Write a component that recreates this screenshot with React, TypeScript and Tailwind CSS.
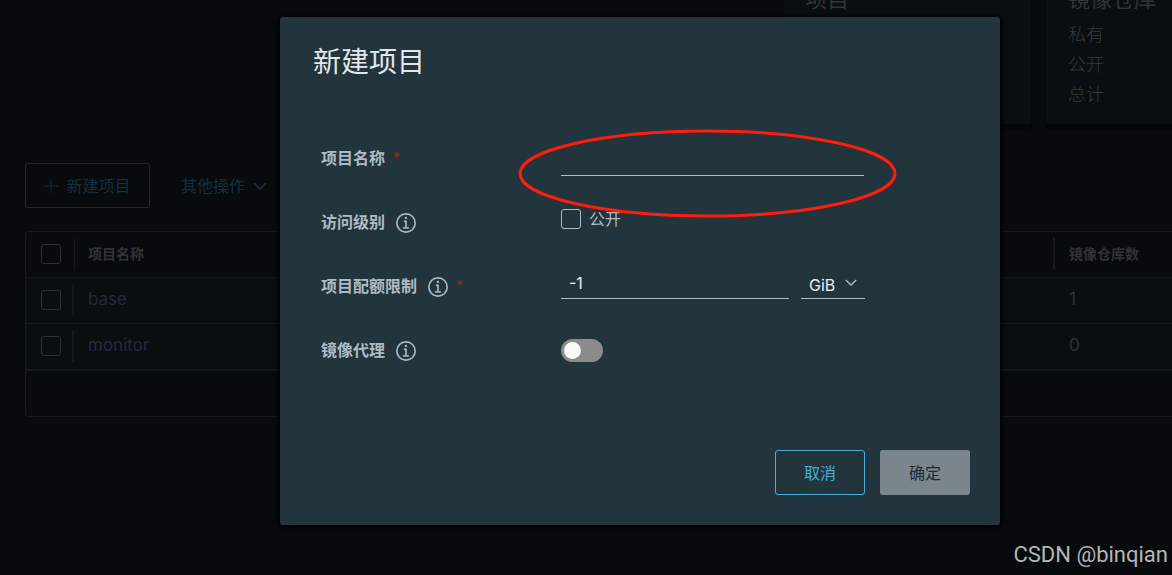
import type { ReactNode } from "react";

const projects = [
  { name: "base", repos: 1 },
  { name: "monitor", repos: 0 },
];

function InfoIcon() {
  return (
    <svg viewBox="6 6 24 24" className="mt-0.5 ml-[11px] size-5 shrink-0" fill="currentColor" aria-hidden="true">
      <circle cx="18" cy="18" r="11" fill="none" stroke="currentColor" strokeWidth="2" />
      <circle cx="17.93" cy="11.9" r="1.4" />
      <path d="M21,23H19V15H16a1,1,0,0,0,0,2h1v6H15a1,1,0,1,0,0,2h6a1,1,0,0,0,0-2Z" />
    </svg>
  );
}

function Chevron({ className }: { className: string }) {
  return (
    <svg viewBox="0 0 14 8" className={className} fill="none" stroke="currentColor" aria-hidden="true">
      <path d="M1 1l6 6 6-6" />
    </svg>
  );
}

function SummaryCards() {
  return (
    <div className="-mt-3.5 -mr-32 flex h-[139px] justify-end gap-[13px]">
      <div className="w-[250px] rounded-b-[3px] border border-[#05080a] bg-[#090e10] px-[22px] shadow-[0_4px_0_#040708]">
        <h3 className="text-[22px] leading-6 text-[#303435]">项目</h3>
      </div>
      <div className="w-[255px] rounded-b-[3px] border border-[#05080a] bg-[#090e10] px-[22px] shadow-[0_4px_0_#040708]">
        <h3 className="text-[22px] leading-6 text-[#303435]">镜像仓库</h3>
        <ul className="pt-[9px] text-lg leading-[30px] font-light text-[#363a3b]">
          <li>私有</li>
          <li>公开</li>
          <li>总计</li>
        </ul>
      </div>
    </div>
  );
}

function Checkbox({ label }: { label: string }) {
  return (
    <input
      type="checkbox"
      aria-label={label}
      className="block size-5 appearance-none rounded-[3px] border border-[#2c3032]"
    />
  );
}

function ProjectTable() {
  return (
    <div className="mt-[23px] ml-[25px] rounded-l-[3px] border border-r-0 border-[#14191b]">
      <table className="w-full table-fixed border-collapse text-left text-[#303436]">
        <thead>
          <tr className="h-[45px] border-b border-[#14191b] text-sm">
            <th className="w-[49px] pl-[15px]">
              <div className="flex h-8 items-center border-r border-[#14191b]">
                <Checkbox label="全选" />
              </div>
            </th>
            <th className="pl-[13px] font-bold">项目名称</th>
            <th className="w-[119px] font-bold">
              <div className="flex h-8 items-center border-l-2 border-[#14191b] pl-3.5">镜像仓库数</div>
            </th>
          </tr>
        </thead>
        <tbody className="bg-[#090e10] text-[17px]">
          {projects.map((project) => (
            <tr key={project.name} className="h-[46px] border-b border-[#14191b]">
              <td className="pl-[15px]">
                <div className="flex h-8 w-[33px] items-center border-r-2 border-[#14191b]">
                  <Checkbox label={project.name} />
                </div>
              </td>
              <td className="pl-[13px]">
                <a href="#project" className="text-[#242a40]">
                  {project.name}
                </a>
              </td>
              <td className="pl-4">{project.repos}</td>
            </tr>
          ))}
        </tbody>
      </table>
      <div className="h-[46px] border-t border-[#14191b]" />
    </div>
  );
}

function Required() {
  return <span className="ml-2 text-sm font-normal text-[#a32618]">*</span>;
}

function Field({ id, label, info, required, children }: {
  id: string;
  label: string;
  info?: boolean;
  required?: boolean;
  children: ReactNode;
}) {
  return (
    <div className="flex h-16 items-center">
      <label htmlFor={id} className="flex w-60 shrink-0 items-center font-bold">
        {label}
        {info && <InfoIcon />}
        {required && <Required />}
      </label>
      {children}
    </div>
  );
}

function NewProjectDialog() {
  return (
    <div
      role="dialog"
      aria-labelledby="dialog-title"
      className="w-full max-w-[720px] rounded-[3px] bg-[#22343c] pb-[30px] text-[#adbbc4] shadow-[0_1px_4px_2px_#000000]"
    >
      <h2 id="dialog-title" className="px-[33px] pt-[25px] text-[28px] leading-10 font-normal text-[#e3e8eb]">
        新建项目
      </h2>
      <form className="mt-11">
        <div className="px-[41px]">
          <Field id="name" label="项目名称" required>
            <div className="relative">
              <input
                id="name"
                type="text"
                className="block h-9 w-[303px] border-b border-[#adbbc4] px-2 text-[#eaedf0] outline-none"
              />
              <svg
                viewBox="0 0 379 89"
                className="pointer-events-none absolute -top-[11px] -left-[43px] h-[89px] w-[379px] max-w-none"
                fill="none"
                aria-hidden="true"
              >
                <ellipse cx="189.5" cy="44.5" rx="187.5" ry="42.5" stroke="#ff1d0d" strokeWidth="3" />
              </svg>
            </div>
          </Field>
          <Field id="public" label="访问级别" info>
            <div className="flex items-center gap-2 pb-1.5">
              <input
                id="public"
                type="checkbox"
                className="size-5 appearance-none rounded-[3px] border border-[#adbbc4]"
              />
              <label htmlFor="public">公开</label>
            </div>
          </Field>
          <Field id="quota" label="项目配额限制" info required>
            <div className="flex gap-3">
              <input
                id="quota"
                type="text"
                defaultValue="-1"
                className="h-[26px] w-[228px] border-b border-[#adbbc4] px-2 pb-1.5 text-[#eaedf0] outline-none"
              />
              <div className="relative">
                <select
                  aria-label="单位"
                  className="block h-[26px] w-16 appearance-none border-b border-[#adbbc4] pb-1.5 pl-2 text-[#eaedf0] outline-none"
                >
                  <option>GiB</option>
                </select>
                <Chevron className="pointer-events-none absolute top-1.5 right-2 h-[7px] w-3 stroke-[1.5]" />
              </div>
            </div>
          </Field>
          <Field id="proxy" label="镜像代理" info>
            <input
              id="proxy"
              type="checkbox"
              role="switch"
              className="flex h-[23px] w-[42px] appearance-none items-center rounded-full bg-[#8c8c8c] px-[3px] before:size-[17px] before:rounded-full before:bg-[#fafafa] checked:justify-end"
            />
          </Field>
        </div>
        <div className="mt-[68px] flex justify-end gap-[15px] px-[30px]">
          <button type="button" className="h-[45px] w-[90px] rounded-[3px] border border-[#49afd9] text-[#49afd9]">
            取消
          </button>
          <button type="submit" className="h-[45px] w-[90px] rounded-[3px] bg-[#7a868b] text-[#1b2a32]">
            确定
          </button>
        </div>
      </form>
    </div>
  );
}

export default function App() {
  return (
    <div className="relative min-h-screen overflow-hidden bg-[#070b0d] font-['Inter','Noto_Sans_CJK_SC',sans-serif] text-base">
      <main>
        <SummaryCards />
        <div className="mt-[38px] flex items-center pl-[25px] text-[#132f3d]">
          <button
            type="button"
            className="flex h-[45px] w-[125px] items-center justify-center gap-2 rounded-[3px] border border-[#132f3d]"
          >
            <svg viewBox="0 0 14 14" className="size-3.5" stroke="currentColor" aria-hidden="true">
              <path d="M7 0v14M0 7h14" />
            </svg>
            新建项目
          </button>
          <button type="button" className="ml-[31px] flex items-center gap-2">
            其他操作
            <Chevron className="h-2 w-3.5 stroke-2" />
          </button>
        </div>
        <ProjectTable />
      </main>
      <div className="absolute inset-0 flex items-start justify-center pt-[17px] pl-[108px]">
        <NewProjectDialog />
      </div>
      <p className="absolute right-1 bottom-2 font-['Roboto',sans-serif] text-[22px] leading-6 text-[#b4b6b7]">
        CSDN @binqian
      </p>
    </div>
  );
}
